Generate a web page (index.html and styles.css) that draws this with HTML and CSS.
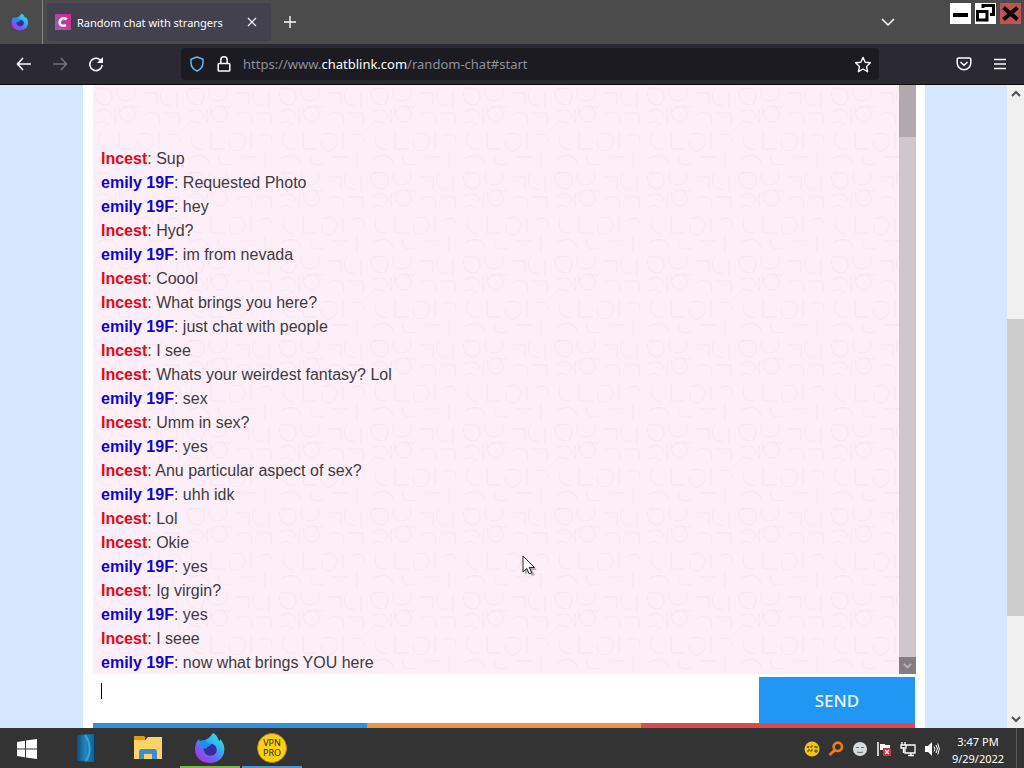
FILE: index.html
```html
<!DOCTYPE html>
<html lang="en">
<head>
<meta charset="utf-8">
<title>Random chat with strangers</title>
<link rel="stylesheet" href="styles.css">
</head>
<body>
<header class="tabbar">
  <div class="pinned">
    <svg width="18" height="18" viewBox="0 0 32 32"><use href="#fox"/></svg>
  </div>
  <div class="tab">
    <svg class="favicon" width="16" height="16" viewBox="0 0 16 16"><defs><linearGradient id="fav" x1="0" y1="1" x2="1" y2="0"><stop offset="0" stop-color="#8d63b4"/><stop offset="1" stop-color="#e0208c"/></linearGradient></defs><path fill="url(#fav)" d="M0 0h16v16H0z"/><path d="M11.800 5.200C9 3 5.100 4.500 4.700 8c-.4 3.600 3 4.600 6.200 3.200" fill="none" stroke="#fff" stroke-width="2.500"/></svg>
    <span class="tab-title">Random chat with strangers</span>
    <button class="icon-btn" aria-label="Close tab"><svg width="10" height="10" viewBox="0 0 10 10"><path d="M1 1l8 8M9 1L1 9" stroke="#f4f4f8" stroke-width="1.200"/></svg></button>
  </div>
  <button class="icon-btn new-tab" aria-label="New tab"><svg width="12" height="12" viewBox="0 0 12 12"><path d="M6 0v12M0 6h12" stroke="#fbfbfe" stroke-width="1.400"/></svg></button>
  <button class="icon-btn all-tabs" aria-label="List all tabs"><svg width="14" height="8" viewBox="0 0 14 8"><path d="M1 1l6 6 6-6" fill="none" stroke="#fbfbfe" stroke-width="1.500"/></svg></button>
  <div class="window-controls">
    <button class="win" aria-label="Minimize"><svg width="21" height="21" viewBox="0 0 21 21"><path d="M3 12h15" stroke="#000" stroke-width="4"/></svg></button>
    <button class="win" aria-label="Restore"><svg width="21" height="21" viewBox="0 0 21 21"><path d="M8 5V2.500h10.500v9H15" fill="none" stroke="#000" stroke-width="3"/><path d="M2.500 8.500h9.500v8.500h-9.500z" fill="#fff" stroke="#000" stroke-width="3"/></svg></button>
    <button class="win win-close" aria-label="Close"><svg width="21" height="21" viewBox="0 0 21 21"><path d="M3.500 4.500l14 12M17.500 4.500l-14 12" stroke="#000" stroke-width="4"/></svg></button>
  </div>
</header>
<nav class="toolbar">
  <div class="history">
    <button class="icon-btn" aria-label="Back"><svg width="16" height="14" viewBox="0 0 16 14"><path d="M7 1L1.500 7 7 13M1.500 7H15" fill="none" stroke="#fbfbfe" stroke-width="1.600"/></svg></button>
    <button class="icon-btn" aria-label="Forward"><svg width="16" height="14" viewBox="0 0 16 14"><path d="M9 1l5.500 6L9 13M14.500 7H1" fill="none" stroke="#72717c" stroke-width="1.600"/></svg></button>
    <button class="icon-btn" aria-label="Reload"><svg width="16" height="16" viewBox="0 0 16 16"><path d="M13.500 5.500A6.200 6.200 0 1 0 14.200 9" fill="none" stroke="#fbfbfe" stroke-width="1.600"/><path d="M15 1v6H9z" fill="#fbfbfe"/></svg></button>
  </div>
  <div class="urlbar">
    <svg width="16" height="16" viewBox="0 0 16 16"><path d="M8 1l6 2.200v3.300c0 4-2.300 7-6 8.500-3.700-1.500-6-4.500-6-8.500V3.200z" fill="none" stroke="#68b8ed" stroke-width="1.500" stroke-linejoin="round"/></svg>
    <svg width="14" height="16" viewBox="0 0 14 16"><path d="M2 7.500h10a.8.8 0 0 1 .8.800v6a.8.8 0 0 1-.8.800H2a.8.8 0 0 1-.8-.8v-6a.8.8 0 0 1 .8-.8zM3.800 7V4a3.200 3.200 0 0 1 6.400 0v3" fill="none" stroke="#fbfbfe" stroke-width="1.500"/></svg>
    <div class="url">https://www.<span class="host">chatblink.com</span>/random-chat#start</div>
    <button class="icon-btn" aria-label="Bookmark"><svg width="18" height="17" viewBox="0 0 18 17"><path d="M9 1.400l2.200 4.900 5.200.5-3.900 3.600 1.100 5.300L9 13l-4.600 2.700 1.100-5.300-3.900-3.600 5.200-.5z" fill="none" stroke="#fbfbfe" stroke-width="1.400" stroke-linejoin="round"/></svg></button>
  </div>
  <button class="icon-btn pocket" aria-label="Save to Pocket"><svg width="16" height="14" viewBox="0 0 16 14"><path d="M2.500 1h11c.8 0 1.300.5 1.300 1.300V6a6.800 6.800 0 0 1-13.600 0V2.300C1.200 1.500 1.700 1 2.500 1z" fill="none" stroke="#fbfbfe" stroke-width="1.500"/><path d="M4.500 5L8 8.300 11.500 5" fill="none" stroke="#fbfbfe" stroke-width="1.500"/></svg></button>
  <button class="icon-btn" aria-label="Menu"><svg width="12" height="12" viewBox="0 0 12 12"><path d="M0 1.500h12M0 6h12M0 10.500h12" stroke="#fbfbfe" stroke-width="1.300"/></svg></button>
</nav>
<div class="viewport">
  <main class="page">
    <div class="sheet">
      <section class="chat">
        <svg class="texture" width="100%" height="100%" aria-hidden="true"><defs><pattern id="loops" width="92" height="84" patternUnits="userSpaceOnUse"><g fill="none" stroke="#f4e6f0" stroke-width="1"><path d="M5 5c8-4 15 0 14 8s-9 9-14 3-4-14 4-13M25 3c-3 7 1 13 8 13s11-7 8-13M4 27c7-5 16-1 15 6M22 24v14M26 22c0 8 2 14 8 15s10-6 7-12-12-4-14 2M37 20c4 3 8 3 10 0M2 40c4-5 9-5 14 0M50 8h14v12M70 4c-6 10 0 18 9 16M84 6v16M52 30c8-6 18 0 14 9M72 28h14v12M8 48c-5 8 0 18 10 16M26 46v18h14M46 50c10-6 18 4 12 12s-16 2-13-6M66 48v16M74 52c6-6 14-2 13 5M4 74c8-6 18-4 20 4M34 70c-3 8 4 12 12 9M56 72h16M80 68v14"/></g></pattern></defs><rect width="100%" height="100%" fill="url(#loops)"/></svg>
        <div class="log">
          <p><b class="you">Incest</b>: Sup</p>
          <p><b class="them">emily 19F</b>: Requested Photo</p>
          <p><b class="them">emily 19F</b>: hey</p>
          <p><b class="you">Incest</b>: Hyd?</p>
          <p><b class="them">emily 19F</b>: im from nevada</p>
          <p><b class="you">Incest</b>: Coool</p>
          <p><b class="you">Incest</b>: What brings you here?</p>
          <p><b class="them">emily 19F</b>: just chat with people</p>
          <p><b class="you">Incest</b>: I see</p>
          <p><b class="you">Incest</b>: Whats your weirdest fantasy? Lol</p>
          <p><b class="them">emily 19F</b>: sex</p>
          <p><b class="you">Incest</b>: Umm in sex?</p>
          <p><b class="them">emily 19F</b>: yes</p>
          <p><b class="you">Incest</b>: Anu particular aspect of sex?</p>
          <p><b class="them">emily 19F</b>: uhh idk</p>
          <p><b class="you">Incest</b>: Lol</p>
          <p><b class="you">Incest</b>: Okie</p>
          <p><b class="them">emily 19F</b>: yes</p>
          <p><b class="you">Incest</b>: Ig virgin?</p>
          <p><b class="them">emily 19F</b>: yes</p>
          <p><b class="you">Incest</b>: I seee</p>
          <p><b class="them">emily 19F</b>: now what brings YOU here</p>
        </div>
        <div class="log-scroll">
          <div class="log-thumb"></div>
          <div class="log-arrow"><svg width="9" height="6" viewBox="0 0 9 6"><path d="M1 1l3.500 3.500L8 1" fill="none" stroke="#b9b2b8" stroke-width="1.800"/></svg></div>
        </div>
      </section>
      <form class="composer">
        <div class="field"><input class="message" type="text" aria-label="Message"><span class="caret"></span></div>
        <button class="send" type="button">SEND</button>
      </form>
      <div class="strip"><div class="s-blue"></div><div class="s-orange"></div><div class="s-red"></div></div>
    </div>
  </main>
  <div class="page-scroll">
    <div class="arrow"><svg width="10" height="7" viewBox="0 0 10 7"><path d="M1 6l4-4 4 4" fill="none" stroke="#505050" stroke-width="2"/></svg></div>
    <div class="track"><div class="thumb"></div></div>
    <div class="arrow"><svg width="10" height="7" viewBox="0 0 10 7"><path d="M1 1l4 4 4-4" fill="none" stroke="#505050" stroke-width="2"/></svg></div>
  </div>
  <svg class="cursor" width="16" height="22" viewBox="0 0 16 22" aria-hidden="true"><path d="M3 3v17l4-4 3 5 3-1-3-5h5z" fill="#b9abb4"/><path d="M1 1v16l3.800-3.500 2.400 5.300 2.500-1-2.400-5.300h5.200z" fill="#fff" stroke="#222" stroke-width="1"/></svg>
</div>
<footer class="taskbar">
  <button class="task" aria-label="Start"><svg width="20" height="20" viewBox="0 0 20 20"><path d="M0 3l8-1.200V9.500H0zM9 1.600L20 0v9.500H9zM0 10.500h8v7.700L0 17zM9 10.500h11V20L9 18.400z" fill="#fff"/></svg></button>
  <button class="task" aria-label="Recycle box"><svg width="20" height="30" viewBox="0 0 20 30"><defs><linearGradient id="box"><stop offset="0" stop-color="#0d4f80"/><stop offset=".5" stop-color="#2187c2"/><stop offset="1" stop-color="#0a6297"/></linearGradient></defs><path d="M1 2L18 1v28L1 28z" fill="url(#box)"/><path d="M18 1l1 1v27h-1z" fill="#073a5e"/><path d="M9 2c6 8 6 18 1 26" fill="none" stroke="#3fa3d8" stroke-width="2"/></svg></button>
  <button class="task" aria-label="File Explorer"><svg width="30" height="26" viewBox="0 0 30 26"><path d="M1 1h10l2 2h-1v4H1z" fill="#df9a1a"/><path d="M1 5h11l3-3h14v22H1z" fill="#fcd468"/><path d="M6 24v-7q0-3 3-3h12q3 0 3 3v7h-5v-5h-8v5z" fill="#3b8dce"/></svg></button>
  <button class="task run-green" aria-label="Firefox"><svg width="32" height="32" viewBox="0 0 32 32"><defs>
    <linearGradient id="fx" x1="1" y1="0" x2=".2" y2="1"><stop offset="0" stop-color="#4ff0c4"/><stop offset=".4" stop-color="#2bb4f2"/><stop offset=".7" stop-color="#6c63ef"/><stop offset="1" stop-color="#b32fe4"/></linearGradient>
    <g id="fox"><path d="M19 1c5 3 5 6 6 8 1 0 1-1 1-2 4 4 5 9 4 14-2 7-8 10-14 10C7 31 1 25 1 17c0-4 1-7 4-10l1 3c1-1 3-2 5-2 3-1 5-3 8-7z" fill="url(#fx)"/><path d="M10 15c3-4 6-2 8-3 4 1 6 5 4 9-2 3-8 4-11 0-1-2-2-4-1-6z" fill="#3b2a9b"/><path d="M5 9l6-1c1 2 3 3 6 4-1 3-4 2-5 5-3-1-6-3-7-8z" fill="#1992ed"/></g>
    </defs><use href="#fox"/></svg></button>
  <button class="task run-blue" aria-label="VPN Pro"><span class="vpn">VPN<br>PRO</span></button>
  <div class="tray">
    <svg width="16" height="16" viewBox="0 0 16 16"><circle cx="8" cy="8" r="7.500" fill="#f0c51f"/><path d="M3 5l1 2 1-2M7 7V5h2M11 7V5l2 2V5M4 11V9h2M7 11V9h2M11 9h2v2h-2z" fill="none" stroke="#5d4a05"/></svg>
    <svg width="16" height="16" viewBox="0 0 16 16"><circle cx="9.800" cy="5.800" r="4.200" fill="none" stroke="#ef7d16" stroke-width="2.600"/><path d="M7 9l-5.500 5" stroke="#ef7d16" stroke-width="3"/></svg>
    <svg width="16" height="16" viewBox="0 0 16 16"><circle cx="8" cy="8" r="7" fill="#d7dddf"/><path d="M4 6.500h3M9 6.500h3M5 11q3 1 6 0" fill="none" stroke="#6b7377" stroke-width="1.200"/></svg>
    <svg width="16" height="16" viewBox="0 0 16 16"><path d="M2 1v14" stroke="#fff" stroke-width="1.500"/><path d="M4 3h5v1h5v6H9V9H4z" fill="#fff"/><path d="M7 7h8v8H7z" fill="#d52d3d"/><path d="M9 9l4 4M13 9l-4 4" stroke="#fff" stroke-width="1.300"/></svg>
    <svg width="16" height="16" viewBox="0 0 16 16"><path d="M6 4h9v8H5V8M8 14.500h6M11 12v2M2 1v3M5 1v3M1 4h5v3H1zM3.500 7v5" fill="none" stroke="#fff" stroke-width="1.300"/></svg>
    <svg width="16" height="16" viewBox="0 0 16 16"><path d="M1 5h3l4-4v14l-4-4H1z" fill="#fff"/><path d="M10 5.500q2 2.500 0 5M12 4q3 4 0 8M13.800 2.500q3 5.500 0 11" fill="none" stroke="#fff" stroke-width="1"/></svg>
  </div>
  <div class="clock"><div>3:47 PM</div><div>9/29/2022</div></div>
  <div class="peek"></div>
</footer>
</body>
</html>
```
FILE: styles.css
```css
* { box-sizing: border-box; }
body {
  margin: 0;
  height: 100vh;
  display: flex;
  flex-direction: column;
  overflow: hidden;
  font-family: "Noto Sans", "Open Sans", sans-serif;
}
svg { display: block; flex: none; }
button { font-family: inherit; border: 0; padding: 0; background: none; }
.icon-btn { display: flex; align-items: center; justify-content: center; flex: none; width: 20px; height: 24px; }

.tabbar { flex: none; height: 44px; display: flex; background: #4b4b4b; }
.pinned {
  width: 43px; border-right: 1px solid #858585;
  display: flex; align-items: center; justify-content: center; padding-right: 2px;
}
.tab {
  width: 224px; margin: 3px 0 3px 4px; padding: 0 9px 0 8px;
  display: flex; align-items: center; gap: 6px;
  background: #42414d; border-radius: 4px; color: #fbfbfe;
}
.tab-title { flex: 1; font-size: 11px; white-space: nowrap; }
.new-tab { align-self: center; margin-left: 9px; }
.all-tabs { align-self: center; margin-left: auto; }
.window-controls { display: flex; gap: 4px; padding: 3px 3px 0 52px; }
.win { width: 21px; height: 21px; background: #fff; }
.win-close { background: #c65352; }

.toolbar {
  flex: none; height: 41px; padding: 0 14px;
  display: flex; align-items: center;
  background: #2b2a33; border-bottom: 1px solid #0c0c0d;
}
.history { display: flex; gap: 16px; }
.urlbar {
  flex: 1; height: 32px; margin: 0 75px; padding: 0 6px 0 8px;
  display: flex; align-items: center; gap: 12px;
  background: #1c1b22; border-radius: 4px;
}
.url { flex: 1; font-size: 13px; color: #908f99; white-space: nowrap; }
.host { color: #fbfbfe; }
.pocket { margin-right: 16px; }

.viewport { position: relative; flex: 1; min-height: 0; display: flex; background: #d5e7ff; }
.page { flex: 1; display: flex; padding: 0 82px 0 83px; }
.sheet { flex: 1; display: flex; flex-direction: column; padding: 0 10px; background: #fff; }
.chat { position: relative; flex: 1; min-height: 0; display: flex; margin-right: -1px; background: #fdeff8; }
.texture { position: absolute; inset: 0; }
.log {
  position: relative; flex: 1; padding: 62px 8px 0;
  font: 16px/24px "Liberation Sans", Arial, sans-serif; color: #3f3a40;
}
.log p { margin: 0; }
.you { color: #dc0a1c; }
.them { color: #1004c8; }
.log-scroll { position: relative; width: 17px; display: flex; flex-direction: column; justify-content: space-between; background: #cfc7cc; }
.log-thumb { height: 52px; background: #b2a9af; }
.log-arrow { height: 17px; display: flex; align-items: center; justify-content: center; background: #857d84; }
.composer { flex: none; display: flex; height: 49px; padding-top: 3px; margin: 0; }
.field { position: relative; flex: 1; display: flex; }
.message { width: 100%; border: 0; outline: 0; padding: 0 8px; font: 16px "Liberation Sans", Arial, sans-serif; background: #fff; }
.caret { position: absolute; left: 8px; top: 6px; width: 1px; height: 16px; background: #000; }
.send { width: 156px; background: #2196f3; color: #e9f6ff; font-size: 17px; font-weight: 500; }
.strip { flex: none; display: grid; grid-template-columns: 1fr 1fr 1fr; height: 5px; }
.s-blue { background: #2f90dc; }
.s-orange { background: #e8964a; }
.s-red { background: #dc4a50; }
.page-scroll { width: 17px; display: flex; flex-direction: column; background: #f0f0f0; }
.arrow { height: 17px; display: flex; align-items: center; justify-content: center; }
.track { flex: 1; padding-top: 217px; }
.thumb { height: 297px; background: #cdcdcd; }
.cursor { position: absolute; left: 522px; top: 470px; }

.taskbar { flex: none; height: 40px; display: flex; background: #333; color: #fff; }
.task { width: 60px; margin-right: 2px; padding-top: 2px; display: flex; align-items: center; justify-content: center; border-bottom: 2px solid transparent; }
.task:first-child { width: 54px; padding-top: 4px; }
.run-green { border-color: #7cb840; }
.run-blue { border-color: #4a98dc; }
.vpn {
  width: 30px; height: 30px; padding-top: 4px;
  border: 1px solid #b48a13; border-radius: 50%; background: #fbd015;
  color: #2f2504; font-size: 9px; line-height: 10px; text-align: center;
}
.tray { margin-left: auto; display: flex; align-items: center; gap: 8px; padding-top: 2px; }
.clock { width: 76px; padding: 5px 0 0; font-size: 11px; line-height: 17px; text-align: center; }
.peek { width: 8px; border-left: 1px solid #5a5a5a; }
```
